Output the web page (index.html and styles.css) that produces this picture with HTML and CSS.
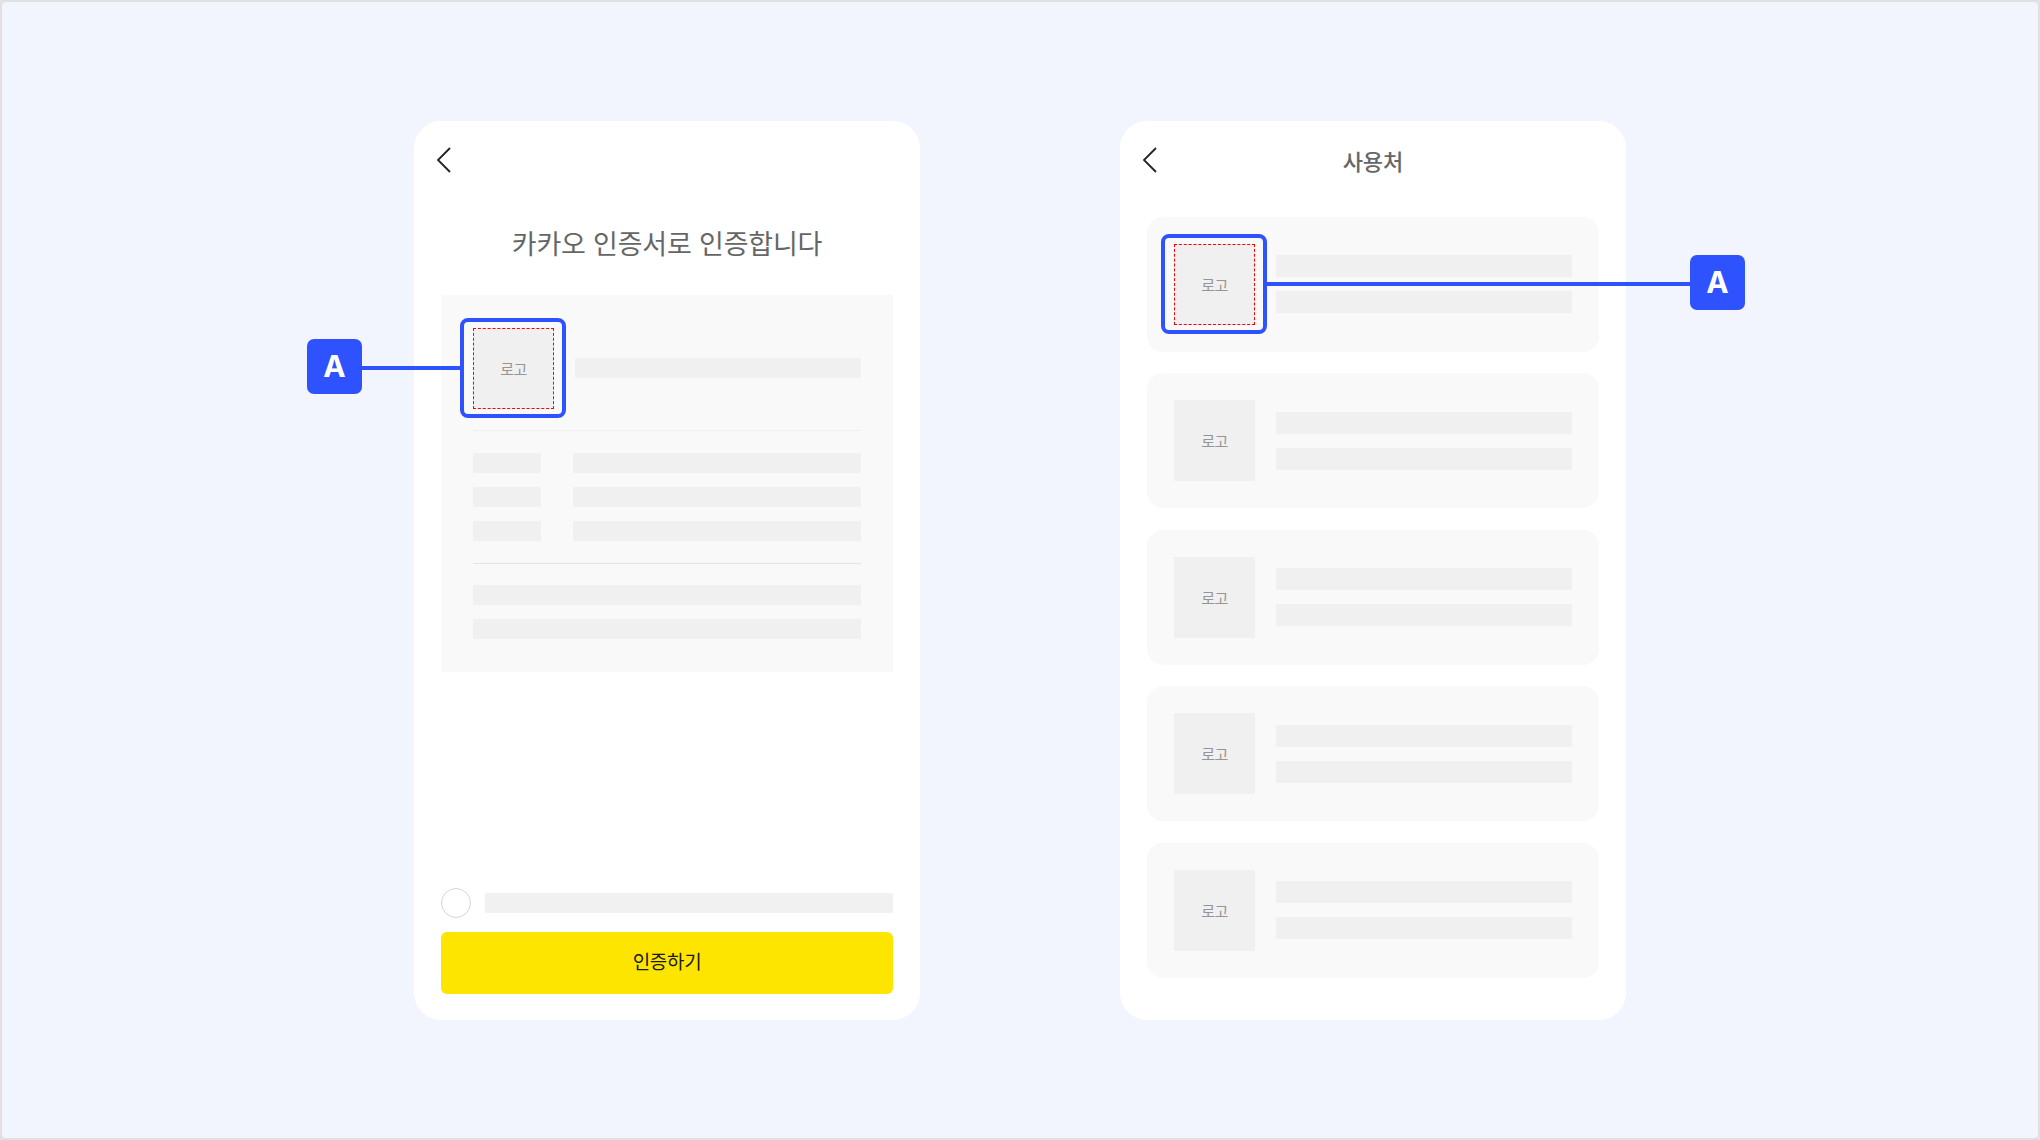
FILE: index.html
```html
<!DOCTYPE html>
<html lang="ko">
<head>
<meta charset="utf-8">
<title>카카오 인증서</title>
<link rel="stylesheet" href="styles.css">
</head>
<body>
<div class="page">
  <section class="card card-left">
    <header class="topbar">
      <svg class="back" width="16" height="28" viewBox="0 0 16 28"><polyline points="14,2 2,14 14,26" fill="none" stroke="#222" stroke-width="1.8" stroke-linejoin="miter"/></svg>
    </header>
    <h1 class="main-title">카카오 인증서로 인증합니다</h1>
    <div class="panel">
      <div class="panel-head">
        <div class="logo-wrap">
          <div class="logo logo-marked">로고</div>
          <div class="hl-box"></div>
          <div class="conn conn-left"></div>
          <div class="badge badge-left">A</div>
        </div>
        <div class="bar bar-head"></div>
      </div>
      <div class="sep"></div>
      <div class="rows">
        <div class="row"><div class="bar label"></div><div class="bar value"></div></div>
        <div class="row"><div class="bar label"></div><div class="bar value"></div></div>
        <div class="row"><div class="bar label"></div><div class="bar value"></div></div>
      </div>
      <div class="sep sep-dark"></div>
      <div class="foot-lines">
        <div class="bar full"></div>
        <div class="bar full"></div>
      </div>
    </div>
    <div class="spacer"></div>
    <div class="agree">
      <span class="radio"></span>
      <div class="bar agree-bar"></div>
    </div>
    <button class="cta">인증하기</button>
  </section>

  <section class="card card-right">
    <header class="topbar">
      <svg class="back" width="16" height="28" viewBox="0 0 16 28"><polyline points="14,2 2,14 14,26" fill="none" stroke="#222" stroke-width="1.8" stroke-linejoin="miter"/></svg>
      <h2 class="bar-title">사용처</h2>
    </header>
    <ul class="list">
      <li class="item">
        <div class="logo-wrap">
          <div class="logo logo-marked">로고</div>
          <div class="hl-box"></div>
          <div class="conn conn-right"></div>
          <div class="badge badge-right">A</div>
        </div>
        <div class="lines"><div class="bar ln"></div><div class="bar ln"></div></div>
      </li>
      <li class="item">
        <div class="logo-wrap"><div class="logo">로고</div></div>
        <div class="lines"><div class="bar ln"></div><div class="bar ln"></div></div>
      </li>
      <li class="item">
        <div class="logo-wrap"><div class="logo">로고</div></div>
        <div class="lines"><div class="bar ln"></div><div class="bar ln"></div></div>
      </li>
      <li class="item">
        <div class="logo-wrap"><div class="logo">로고</div></div>
        <div class="lines"><div class="bar ln"></div><div class="bar ln"></div></div>
      </li>
      <li class="item">
        <div class="logo-wrap"><div class="logo">로고</div></div>
        <div class="lines"><div class="bar ln"></div><div class="bar ln"></div></div>
      </li>
    </ul>
  </section>
</div>
</body>
</html>
```

FILE: styles.css
```css
* { box-sizing: border-box; }

html, body {
  margin: 0;
  padding: 0;
}

body {
  width: 2040px;
  height: 1140px;
  background: #e2e2e2;
  font-family: "Noto Sans CJK KR", "Noto Sans", sans-serif;
}

.page {
  width: 2040px;
  height: 1140px;
  border: 2px solid #e0e0e0;
  border-radius: 6px;
  background: #f2f5fe;
  display: flex;
  justify-content: center;
  align-items: center;
  gap: 200px;
}

.card {
  width: 506px;
  height: 899px;
  background: #ffffff;
  border-radius: 27px;
  display: flex;
  flex-direction: column;
  padding: 0 27px 26px;
}

.topbar {
  position: relative;
  height: 84px;
  margin: 0 -5px;
  padding-bottom: 6px;
  display: flex;
  align-items: center;
  justify-content: center;
}

.back {
  position: absolute;
  left: 0;
  top: 25px;
}

.main-title {
  margin: 18px 0 32px;
  font-size: 27px;
  line-height: 40px;
  font-weight: 400;
  color: #666666;
  text-align: center;
  letter-spacing: -0.2px;
}

.bar-title {
  margin: 0;
  font-size: 22px;
  line-height: 30px;
  font-weight: 500;
  color: #666666;
}

.bar {
  background: #f0f0f0;
}

.panel {
  background: #f9f9f9;
  padding: 33px 32px 33px;
}

.panel-head {
  display: flex;
  align-items: center;
  gap: 21px;
}

.bar-head {
  flex: 1;
  height: 20px;
}

.logo-wrap {
  position: relative;
  width: 81px;
  height: 81px;
  flex: none;
}

.logo {
  width: 81px;
  height: 81px;
  background: #f0f0f0;
  display: flex;
  align-items: center;
  justify-content: center;
  font-size: 15px;
  color: #959595;
  letter-spacing: -0.5px;
}

.logo-marked {
  border: 1px dashed #ff0000;
}

.hl-box {
  position: absolute;
  left: -13px;
  top: -10px;
  width: 106px;
  height: 100px;
  border: 4px solid #2f52ff;
  border-radius: 8px;
}

.conn {
  position: absolute;
  top: 38px;
  height: 4px;
  background: #2f52ff;
}

.conn-left {
  left: -111px;
  width: 99px;
}

.conn-right {
  left: 92px;
  width: 424px;
}

.badge {
  position: absolute;
  top: 11px;
  width: 55px;
  height: 55px;
  border-radius: 7px;
  background: #2f52ff;
  color: #ffffff;
  font-family: "Inter", "Liberation Sans", sans-serif;
  font-weight: 700;
  font-size: 30px;
  display: flex;
  align-items: center;
  justify-content: center;
}

.badge-left { left: -166px; }
.badge-right { left: 516px; }

.sep {
  height: 1px;
  background: #efefef;
  margin: 21px 0 22px;
}

.sep-dark {
  background: #e4e4e4;
  margin: 22px 0 21px;
}

.rows {
  display: flex;
  flex-direction: column;
  gap: 14px;
}

.row {
  display: flex;
  gap: 32px;
  height: 20px;
}

.label {
  width: 68px;
}

.value {
  flex: 1;
}

.foot-lines {
  display: flex;
  flex-direction: column;
  gap: 14px;
}

.full {
  height: 20px;
}

.spacer {
  flex: 1;
}

.agree {
  display: flex;
  align-items: center;
  gap: 14px;
  height: 30px;
}

.radio {
  width: 30px;
  height: 30px;
  border-radius: 50%;
  border: 1px solid #d6d6d6;
  background: #ffffff;
  flex: none;
}

.agree-bar {
  flex: 1;
  height: 20px;
  background: #f1f1f1;
}

.cta {
  margin-top: 14px;
  height: 62px;
  width: 100%;
  border: none;
  border-radius: 6px;
  background: #fee500;
  color: #191919;
  font-family: "Noto Sans CJK KR", "Noto Sans", sans-serif;
  font-size: 19px;
  font-weight: 400;
  letter-spacing: -0.3px;
  padding: 0 0 4px;
}

.list {
  list-style: none;
  margin: 12px 0 0;
  padding: 0;
  display: flex;
  flex-direction: column;
  gap: 21.5px;
}

.item {
  height: 135px;
  background: #f9f9f9;
  border-radius: 16px;
  padding: 27px;
  display: flex;
  align-items: center;
  gap: 21px;
}

.lines {
  flex: 1;
  display: flex;
  flex-direction: column;
  gap: 14px;
}

.ln {
  height: 22px;
}
```
